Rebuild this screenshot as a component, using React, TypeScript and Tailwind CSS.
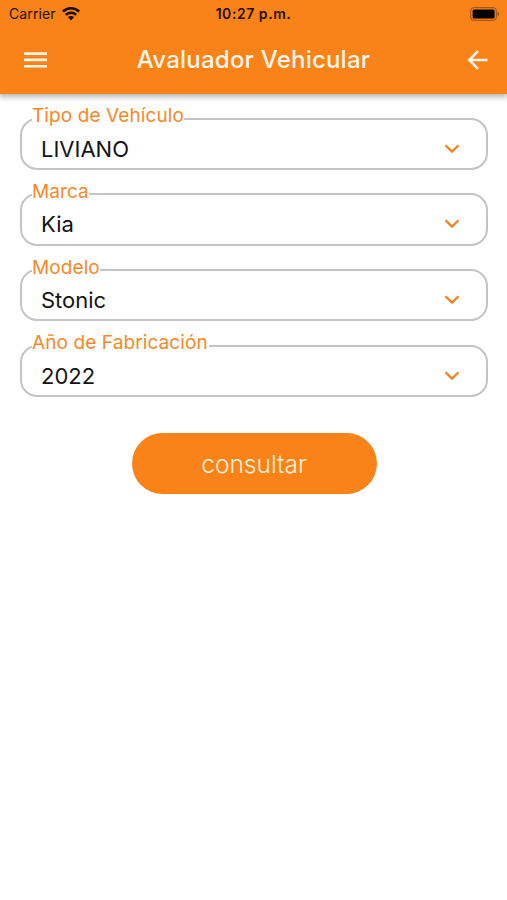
import React from 'react'

const fields = [
  { label: 'Tipo de Vehículo', value: 'LIVIANO', labelClass: 'w-[152px]' },
  { label: 'Marca', value: 'Kia', labelClass: 'w-[57px]' },
  { label: 'Modelo', value: 'Stonic', labelClass: 'w-[68px]' },
  { label: 'Año de Fabricación', value: '2022', labelClass: 'w-[177px]' },
]

function StatusBar() {
  return (
    <div className="grid h-[27px] grid-cols-3 items-center pl-[9px] pr-[7px] text-[#1c0f02]">
      <div className="flex items-center gap-[6px]">
        <span className="text-[14px] leading-none tracking-[0.1px]">Carrier</span>
        <svg width="18" height="14" viewBox="0 0 18 14" fill="none" stroke="currentColor" strokeWidth="2.6">
          <path d="M0.9 4.6C5.4 0.2 12.6 0.2 17.1 4.6" />
          <path d="M3.8 7.9C6.8 5.1 11.2 5.1 14.2 7.9" />
          <path d="M5.9 10.1C7.7 8.6 10.3 8.6 12.1 10.1L9 13.4Z" fill="currentColor" stroke="none" />
        </svg>
      </div>
      <span className="-ml-[2px] whitespace-nowrap text-center text-[14px] font-semibold leading-none tracking-[0.55px]">
        10:27 p.m.
      </span>
      <svg className="justify-self-end" width="30" height="14" viewBox="0 0 30 14">
        <rect x="0.6" y="0.6" width="25.8" height="12.8" rx="3.8" fill="none" stroke="#a8590f" strokeWidth="1.2" />
        <rect x="2.6" y="2.4" width="22" height="9.2" rx="1.6" fill="#000" />
        <path d="M27.6 4.8C29.6 5.5 29.6 8.5 27.6 9.2Z" fill="#8a4b12" />
      </svg>
    </div>
  )
}

function AppBar() {
  return (
    <div className="flex h-[65px] items-center justify-between pl-6 pr-[19px]">
      <svg width="23" height="16" viewBox="0 0 23 16" fill="#fff5e8">
        <path d="M0 0.3H23V2.9H0ZM0 6.6H23V9.2H0ZM0 12.9H23V15.5H0Z" />
      </svg>
      <h1 className="-ml-[7px] text-[24px] font-medium leading-none tracking-[0.22px] text-[#fff5e8]">
        Avaluador Vehicular
      </h1>
      <svg width="21" height="20" viewBox="0 0 21 20" fill="none" stroke="#fff5e8" strokeWidth="2.5">
        <path d="M20.5 10H2.5M11 1.2L2.2 10L11 18.8" />
      </svg>
    </div>
  )
}

function SelectField({ label, value, labelClass }: (typeof fields)[number]) {
  return (
    <fieldset className="h-[60.7px] min-w-0 rounded-[17px] border-2 border-[#c4c4c4] pl-[19px] pr-[26px]">
      <legend
        className={`-ml-[9px] h-[19px] whitespace-nowrap text-[19px] leading-[13px] tracking-[0.1px] text-[#f78828] ${labelClass}`}
      >
        {label}
      </legend>
      <div className="flex h-[41px] items-center justify-between">
        <span className="text-[22px] leading-none text-[#141414]">{value}</span>
        <svg width="16" height="10" viewBox="0 0 16 10" fill="none" stroke="#f58220" strokeWidth="2.3">
          <path d="M1.5 1.2L8 7.6L14.5 1.2" />
        </svg>
      </div>
    </fieldset>
  )
}

export default function App() {
  return (
    <main className="min-h-screen bg-white font-['Inter','Liberation_Sans',sans-serif]">
      <header className="h-[94px] bg-[#f98319] shadow-[0_2px_6px_1px_rgba(0,0,0,0.3)]">
        <StatusBar />
        <AppBar />
      </header>

      <section className="flex flex-col gap-[15px] pl-[20px] pr-[19px] pt-[15.2px]">
        {fields.map((field) => (
          <SelectField key={field.label} {...field} />
        ))}
      </section>

      <div className="flex justify-center pl-px pt-[36.5px]">
        <button className="h-[61px] w-[245px] rounded-full bg-[#f98319] text-[24.5px] font-light leading-none text-[#fff0d8]">
          consultar
        </button>
      </div>
    </main>
  )
}
